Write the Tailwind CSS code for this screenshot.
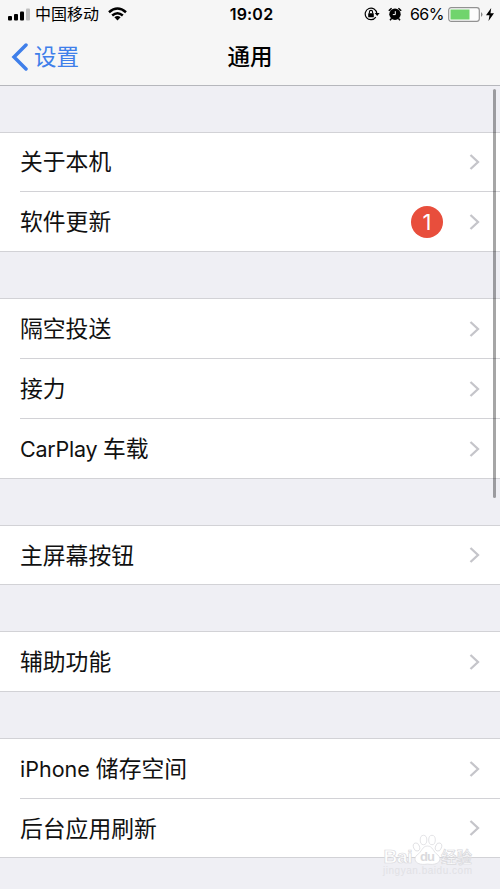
<!DOCTYPE html>
<html lang="zh-CN">
<head>
<meta charset="utf-8">
<title>通用</title>
<script src="https://cdn.jsdelivr.net/npm/@tailwindcss/browser@4"></script>
</head>
<body class="relative w-[500px] h-[889px] overflow-hidden bg-[#efeff4] text-[#111] font-['Inter','Noto_Sans_CJK_SC',sans-serif]">
<svg class="hidden"><symbol id="chev" viewBox="0 0 12 18"><path d="M1.500 2L9 9L1.500 16" fill="none" stroke="#c5c5ca" stroke-width="2.300"/></symbol></svg>

<header class="h-[86px] bg-[#f6f6f6] border-b border-[#b6b7bc]">
  <div class="grid grid-cols-3 items-center h-7 text-black">
    <div class="flex items-center pl-2">
      <svg class="w-[22px] h-[13px]" viewBox="0 0 22 13"><rect y="8" width="4" height="4.500" rx="1"/><rect x="6" y="6" width="4" height="6.500" rx="1"/><rect x="12" y="3.500" width="4" height="9" rx="1"/><rect x="18" y="0.500" width="4" height="12" rx="1" fill="#bdbdbd"/></svg>
      <span class="ml-[5px] text-[16px] leading-7 whitespace-nowrap">中国移动</span>
      <svg class="ml-[9px] w-[19px] h-[14px]" viewBox="0 0 19 14"><g fill="none" stroke="#000" stroke-width="2.500"><path d="M1 5.300Q9.500-2.300 18 5.300"/><path d="M4.200 8.500Q9.500 3.900 14.800 8.500"/></g><path d="M6.400 10.300Q9.500 7.800 12.600 10.300L9.500 13.400Z"/></svg>
    </div>
    <div class="pl-[3px] text-center text-[16px] leading-7 font-semibold tracking-[0.2px]">19:02</div>
    <div class="flex items-center justify-end pr-[6px]">
      <svg class="w-4 h-[14px] shrink-0" viewBox="0 0 16 14"><path d="M11.800 10.200A5.800 5.800 0 1 1 12.800 6.500" fill="none" stroke="#000" stroke-width="1.200"/><path d="M10.700 6H15.600L13.200 9Z"/><rect x="4.200" y="6.200" width="5.600" height="4" rx=".5"/><path d="M5.400 6.500V5A1.600 1.600 0 0 1 8.600 5V6.500" fill="none" stroke="#000" stroke-width="1.100"/></svg>
      <svg class="ml-2 w-[14px] h-[14px] shrink-0" viewBox="0 0 14 14"><circle cx="7" cy="7.300" r="5.700"/><path d="M.8 3.800L3.600 1.200M10.400 1.200L13.200 3.800M3.500 11.500L2 13.300M10.500 11.500L12 13.300" stroke="#000" stroke-width="1.500"/><path d="M7.300 4.200V7.600H4.800" stroke="#fff" stroke-width="1" fill="none"/></svg>
      <span class="ml-[8px] text-[16px] leading-7 tracking-[-0.500px]">66%</span>
      <svg class="ml-[4px] w-[35px] h-[15px] shrink-0" viewBox="0 0 35 15"><rect x=".7" y=".7" width="30.600" height="13.600" rx="2.500" fill="#fcfcfc" stroke="#929292" stroke-width="1.200"/><rect x="2.500" y="2.500" width="19" height="10" fill="#70d46d"/><path d="M33 5Q36 7.500 33 10Z" fill="#888"/></svg>
      <svg class="ml-[3px] w-[8px] h-[13px] shrink-0" viewBox="0 0 8 13"><path d="M5.200 0L0 7.300H3.500L2.500 13L8 5.300H4.500Z"/></svg>
    </div>
  </div>
  <nav class="grid grid-cols-3 items-center h-[57px]">
    <div class="flex items-center pl-[11px] text-[#3f7fea]">
      <svg class="w-[18px] h-[28px]" viewBox="0 0 18 28"><path d="M15 2L3 14L15 26" fill="none" stroke="currentColor" stroke-width="3.500" stroke-linecap="round"/></svg>
      <span class="ml-[5px] text-[22.500px] leading-8">设置</span>
    </div>
    <h1 class="text-center text-[22.500px] leading-8 font-medium text-black">通用</h1>
  </nav>
</header>

<main>
  <section class="mt-[46px] h-[120px] bg-white border-y border-[#d2d2d6]">
    <div class="flex items-center justify-between ml-5 pr-[19px] h-[59px] border-b border-[#d2d2d6]"><span class="text-[22.800px]">关于本机</span><svg class="w-3 h-[18px]"><use href="#chev"/></svg></div>
    <div class="flex items-center ml-5 pr-[19px] h-[59px]"><span class="pt-[2px] text-[22.800px]">软件更新</span><span class="ml-auto mr-[26px] size-8 rounded-full bg-[#e84e3c] text-white text-[22px] leading-8 text-center">1</span><svg class="w-3 h-[18px]"><use href="#chev"/></svg></div>
  </section>
  <section class="mt-[46px] h-[181px] bg-white border-y border-[#d2d2d6]">
    <div class="flex items-center justify-between ml-5 pr-[19px] h-[60px] border-b border-[#d2d2d6]"><span class="pt-[2px] text-[22.800px]">隔空投送</span><svg class="w-3 h-[18px]"><use href="#chev"/></svg></div>
    <div class="flex items-center justify-between ml-5 pr-[19px] h-[60px] border-b border-[#d2d2d6]"><span class="pt-[2px] text-[22.800px]">接力</span><svg class="w-3 h-[18px]"><use href="#chev"/></svg></div>
    <div class="flex items-center justify-between ml-5 pr-[19px] h-[59px]"><span class="pt-[2px] text-[22.800px]"><span class="text-[21.500px] tracking-[-0.250px]">CarPlay </span>车载</span><svg class="w-3 h-[18px]"><use href="#chev"/></svg></div>
  </section>
  <section class="mt-[46px] h-[60px] bg-white border-y border-[#d2d2d6]">
    <div class="flex items-center justify-between ml-5 pr-[19px] h-[58px]"><span class="pt-[2px] text-[22.800px]">主屏幕按钮</span><svg class="w-3 h-[18px]"><use href="#chev"/></svg></div>
  </section>
  <section class="mt-[46px] h-[61px] bg-white border-y border-[#d2d2d6]">
    <div class="flex items-center justify-between ml-5 pr-[19px] h-[59px]"><span class="pt-[2px] text-[22.800px]">辅助功能</span><svg class="w-3 h-[18px]"><use href="#chev"/></svg></div>
  </section>
  <section class="mt-[46px] h-[120px] bg-white border-y border-[#d2d2d6]">
    <div class="flex items-center justify-between ml-5 pr-[19px] h-[60px] border-b border-[#d2d2d6]"><span class="pt-[1px] text-[22.800px]"><span class="text-[21.500px]">iPhone </span>储存空间</span><svg class="w-3 h-[18px]"><use href="#chev"/></svg></div>
    <div class="flex items-center justify-between ml-5 pr-[19px] h-[58px]"><span class="pt-[2px] text-[22.800px]">后台应用刷新</span><svg class="w-3 h-[18px]"><use href="#chev"/></svg></div>
  </section>
</main>

<div class="absolute right-[4px] top-[89px] w-[3px] h-[409px] rounded-full bg-black/35"></div>

<svg class="absolute left-[380px] top-[832px] w-[100px] h-[48px]" viewBox="0 0 100 48">
  <g fill="#fff" stroke="#d8d8dc" stroke-width=".7">
    <ellipse cx="36.500" cy="15" rx="3" ry="4.200" transform="rotate(-20 36.500 15)"/><ellipse cx="43.500" cy="8" rx="3.300" ry="4.700"/><ellipse cx="52" cy="8" rx="3.300" ry="4.700"/><ellipse cx="58.500" cy="15" rx="3" ry="4.200" transform="rotate(20 58.500 15)"/>
    <path d="M47.500 14C42 14 42 20 37 23C32 28 37 34 47.500 32C58 34 63 28 58 23C53 20 53 14 47.500 14Z"/>
    <text x="3.500" y="31" font-family="Liberation Sans" font-size="19" font-weight="bold" textLength="29">Bai</text>
    <text x="61" y="31" font-family="Noto Sans CJK SC" font-size="15.500" font-weight="500" textLength="31">经验</text>
  </g>
  <text x="40" y="29" font-family="Liberation Sans" font-size="13" font-weight="bold" fill="#dadadd" textLength="15">du</text>
  <text x="3" y="42" font-family="Liberation Sans" font-size="10" fill="#e1e1e5" textLength="89">jingyan.baidu.com</text>
</svg>
</body>
</html>
